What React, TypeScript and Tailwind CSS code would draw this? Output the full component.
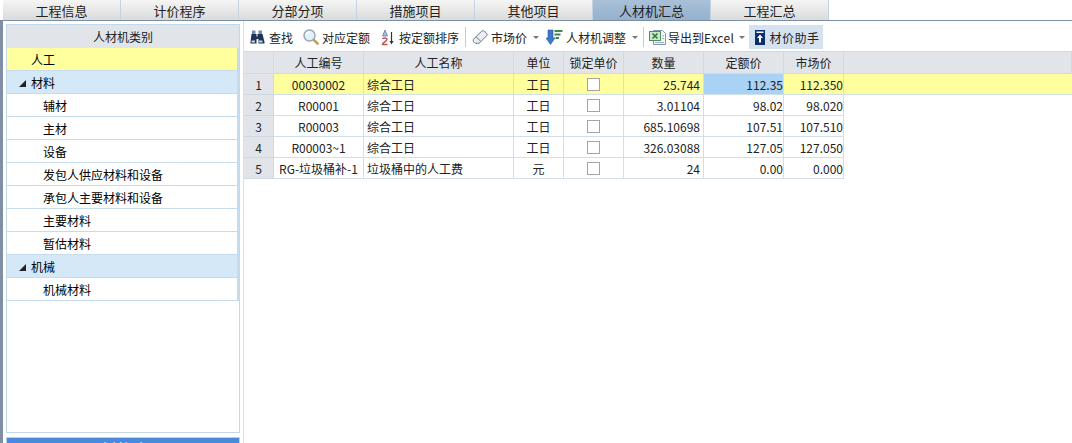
import React from 'react'

const tabs = ['工程信息', '计价程序', '分部分项', '措施项目', '其他项目', '人材机汇总', '工程汇总']

const categories = [
    { label: '人工', type: 'active' },
    { label: '材料', type: 'group' },
    { label: '辅材', type: 'item' },
    { label: '主材', type: 'item' },
    { label: '设备', type: 'item' },
    { label: '发包人供应材料和设备', type: 'item' },
    { label: '承包人主要材料和设备', type: 'item' },
    { label: '主要材料', type: 'item' },
    { label: '暂估材料', type: 'item' },
    { label: '机械', type: 'group' },
    { label: '机械材料', type: 'item' },
]

const rows = [
    { no: 1, code: '00030002', name: '综合工日', unit: '工日', qty: '25.744', quota: '112.35', market: '112.350' },
    { no: 2, code: 'R00001', name: '综合工日', unit: '工日', qty: '3.01104', quota: '98.02', market: '98.020' },
    { no: 3, code: 'R00003', name: '综合工日', unit: '工日', qty: '685.10698', quota: '107.51', market: '107.510' },
    { no: 4, code: 'R00003~1', name: '综合工日', unit: '工日', qty: '326.03088', quota: '127.05', market: '127.050' },
    { no: 5, code: 'RG-垃圾桶补-1', name: '垃圾桶中的人工费', unit: '元', qty: '24', quota: '0.00', market: '0.000' },
]

function Binoculars() {
    return (
        <svg width="16" height="14" viewBox="0 0 16 14" className="shrink-0">
            <rect x="3" y="0.500" width="3.500" height="4" fill="#6f8db5" />
            <rect x="9.500" y="0.500" width="3.500" height="4" fill="#6f8db5" />
            <path d="M2.500 4h5v2.500h1V4h5l2 8v1.500h-6V9H7.500v4.500h-6V12z" fill="#1f3557" />
            <rect x="2.500" y="10.500" width="3.500" height="2" fill="#c9d8e8" />
            <rect x="10" y="10.500" width="3.500" height="2" fill="#c9d8e8" />
        </svg>
    )
}

function Magnifier() {
    return (
        <svg width="16" height="16" viewBox="0 0 16 16" className="shrink-0">
            <circle cx="6.500" cy="6.500" r="5.500" fill="#e6eef7" stroke="#96a6b8" strokeWidth="1.400" />
            <path d="M3.500 5.500a3.500 3.500 0 0 1 3-2.500" fill="none" stroke="#ffffff" strokeWidth="1.600" />
            <path d="M10.800 10.800l3.700 3.700" stroke="#c9a04a" strokeWidth="2.600" strokeLinecap="round" />
        </svg>
    )
}

function SortIcon() {
    return (
        <svg width="13" height="17" viewBox="0 0 13 17" className="shrink-0">
            <path d="M1.500 7l2.500-6 2.500 6z" fill="#a9bfdc" stroke="#4d6fa3" strokeWidth="0.700" />
            <path d="M1.500 10c.5-1.500 4.500-1.500 4.500.5 0 1.500-4 2.500-4.500 5h5" fill="none" stroke="#b9574f" strokeWidth="1.400" />
            <path d="M10.500 3v10" stroke="#333333" strokeWidth="1.200" />
            <path d="M8.500 12h4l-2 3.500z" fill="#333333" />
        </svg>
    )
}

function Eraser() {
    return (
        <svg width="16" height="14" viewBox="0 0 16 14" className="shrink-0">
            <path d="M1.200 9.500L9.500 1.300c.8-.8 1.900-.8 2.700-.1l2.500 2.200c.8.700.8 1.700 0 2.400L7 13.300H3.500c-1.500-.6-2.600-2-2.300-3.800z" fill="#e9edf2" stroke="#6f7b88" strokeWidth="1" />
            <path d="M4 6.800l4.500 4.200" stroke="#6f7b88" strokeWidth="1" />
        </svg>
    )
}

function AdjustIcon() {
    return (
        <svg width="17" height="16" viewBox="0 0 17 16" className="shrink-0">
            <path d="M2 1h5v8h2l-4.500 6.500L0 9h2z" fill="#3f78c9" stroke="#2a5597" strokeWidth="0.600" />
            <rect x="8.500" y="1" width="8" height="2" fill="#3d8a4a" />
            <rect x="8.500" y="4.500" width="6" height="2" fill="#3d8a4a" />
            <rect x="9.500" y="8" width="3.500" height="2" fill="#3d8a4a" />
        </svg>
    )
}

function ExcelIcon() {
    return (
        <svg width="17" height="16" viewBox="0 0 17 16" className="shrink-0">
            <path d="M4.500 1.500h9l3 3v11h-12z" fill="#f3f6fa" stroke="#8296ad" strokeWidth="1" />
            <rect x="0.500" y="2.500" width="11" height="9" fill="#cfe5cf" stroke="#4f8f5a" strokeWidth="1" />
            <path d="M3.500 4.500l5 5M8.500 4.500l-5 5" stroke="#2a7a3a" strokeWidth="1.600" />
            <path d="M13 7h2M13 9.500h2M6 13.500h9" stroke="#9fb0c3" strokeWidth="1" />
        </svg>
    )
}

function HelperIcon() {
    return (
        <svg width="10" height="15" viewBox="0 0 10 15" className="shrink-0">
            <rect x="0" y="0" width="10" height="15" fill="#0d2f6e" />
            <rect x="1.500" y="1.500" width="7" height="1.500" fill="#ffffff" />
            <path d="M5 4.500l3 3.500H6v4.500H4V8H2z" fill="#ffffff" />
        </svg>
    )
}

function Caret() {
    return <span className="ml-[3px] h-0 w-0 border-x-[3px] border-t-[3px] border-x-transparent border-t-[#777777]" />
}

function Tool({ icon, label, caret, active, className }: { icon: React.ReactNode; label: React.ReactNode; caret?: boolean; active?: boolean; className?: string }) {
    return (
        <div className={`flex h-[24px] items-center ${active ? 'bg-[#d5e3f1]' : ''} ${className ?? ''}`}>
            {icon}
            <span className="pt-[2px] leading-none whitespace-nowrap">{label}</span>
            {caret && <Caret />}
        </div>
    )
}

export default function App() {
    return (
        <div className="flex h-[443px] w-[1072px] flex-col overflow-hidden bg-white text-[12px] text-[#222222] [font-family:'Noto_Sans_CJK_SC','Liberation_Sans',sans-serif]">
            <div className="flex h-[21px] shrink-0 border-b border-[#7d8fa6] pl-[3px]">
                {tabs.map((t, i) => (
                    <div
                        key={t}
                        className={`flex h-[20px] w-[118px] items-center justify-center border-r border-[#c5d2df] text-[13px] leading-none ${i === 5 ? 'bg-gradient-to-b from-[#a9c0d8] to-[#95b1cd]' : 'bg-gradient-to-b from-[#f5f5f3] to-[#d9dcdc]'}`}
                    >
                        {t}
                    </div>
                ))}
            </div>
            <div className="flex min-h-0 flex-1">
                <div className="w-[244px] shrink-0 border-l-[3px] border-r border-l-[#7f8fa8] border-r-[#d4e3ee] px-[3px] pt-[3px]">
                    <div className="flex h-[409px] w-[234px] flex-col border border-[#c3d9e8]">
                        <div className="flex h-[23px] items-center justify-center bg-[#e1e5ea] pt-px">人材机类别</div>
                        {categories.map((c) => (
                            <div
                                key={c.label}
                                className={`flex h-[23px] items-center border-b border-r-2 border-[#c6dcec] pt-[2px] leading-none text-black ${c.type === 'active' ? 'bg-[#ffff9e] pl-[24px]' : c.type === 'group' ? 'bg-[#d4e8f7] pl-[12px]' : 'bg-white pl-[36px]'}`}
                            >
                                {c.type === 'group' && (
                                    <svg width="7" height="7" viewBox="0 0 7 7" className="mr-[5px] shrink-0">
                                        <path d="M7 0v7H0z" fill="#222222" />
                                    </svg>
                                )}
                                {c.label}
                            </div>
                        ))}
                    </div>
                    <div className="mt-[4px] flex h-[20px] w-[234px] justify-center border border-[#b9d4e8] bg-[#4a89dc] pt-[3px] leading-[14px] text-white">
                        人材机表
                    </div>
                </div>
                <div className="flex min-w-0 flex-1 flex-col">
                    <div className="flex h-[30px] shrink-0 items-center pl-[5px] pt-[2px]">
                        <Tool icon={<Binoculars />} label="查找" className="mr-[10px] gap-[4px]" />
                        <Tool icon={<Magnifier />} label="对应定额" className="mr-[11px] gap-[3px]" />
                        <Tool icon={<SortIcon />} label="按定额排序" className="mr-[6px] gap-[5px]" />
                        <div className="mr-[6px] h-[20px] w-px bg-[#c3ccd6]" />
                        <Tool icon={<Eraser />} label="市场价" caret className="mr-[7px] gap-[3px]" />
                        <Tool icon={<AdjustIcon />} label="人材机调整" caret className="mr-[5px] gap-[3px]" />
                        <div className="mr-[5px] h-[20px] w-px bg-[#c3ccd6]" />
                        <Tool
                            icon={<ExcelIcon />}
                            label={
                                <>
                                    导出到<span className="tracking-[0.4px]">Excel</span>
                                </>
                            }
                            caret
                            className="mr-[4px] gap-[2px]"
                        />
                        <Tool icon={<HelperIcon />} label={<span className="tracking-[0.5px]">材价助手</span>} active className="gap-[4px] pl-[6px] pr-[4px]" />
                    </div>
                    <div className="grid shrink-0 grid-cols-[30px_90px_150px_50px_60px_80px_80px_60px_1fr] leading-none">
                        {['', '人工编号', '人工名称', '单位', '锁定单价', '数量', '定额价', '市场价', ''].map((h, i) => (
                            <div key={i} className="flex h-[23px] items-center justify-center border-b border-r border-t border-[#cddbe8] bg-[#e1e5ea]">
                                {h}
                            </div>
                        ))}
                        {rows.map((r, ri) => {
                            const bg = ri === 0 ? 'bg-[#ffff9e]' : 'bg-white'
                            const cell = `flex h-[21px] items-center border-b border-r border-[#cfe0ec] pt-px ${bg}`
                            return (
                                <React.Fragment key={r.no}>
                                    <div className="flex h-[21px] items-center justify-center border-b border-r border-[#cfd9e3] bg-[#e1e5ea] pt-px">{r.no}</div>
                                    <div className={`${cell} justify-center whitespace-nowrap`}>{r.code}</div>
                                    <div className={`${cell} pl-[3px]`}>{r.name}</div>
                                    <div className={`${cell} justify-center`}>{r.unit}</div>
                                    <div className={`${cell} justify-center`}>
                                        <span className="block h-[13px] w-[13px] border border-[#a5a5a5] bg-white" />
                                    </div>
                                    <div className={`${cell} justify-end pr-[3px]`}>{r.qty}</div>
                                    <div className={`${cell} justify-end ${ri === 0 ? '!bg-[#a9d2f5]' : ''}`}>{r.quota}</div>
                                    <div className={`${cell} justify-end`}>{r.market}</div>
                                    {ri === 0 ? <div className="h-[21px] border-b border-[#cfe0ec] bg-[#ffff9e]" /> : <div />}
                                </React.Fragment>
                            )
                        })}
                    </div>
                </div>
            </div>
        </div>
    )
}
